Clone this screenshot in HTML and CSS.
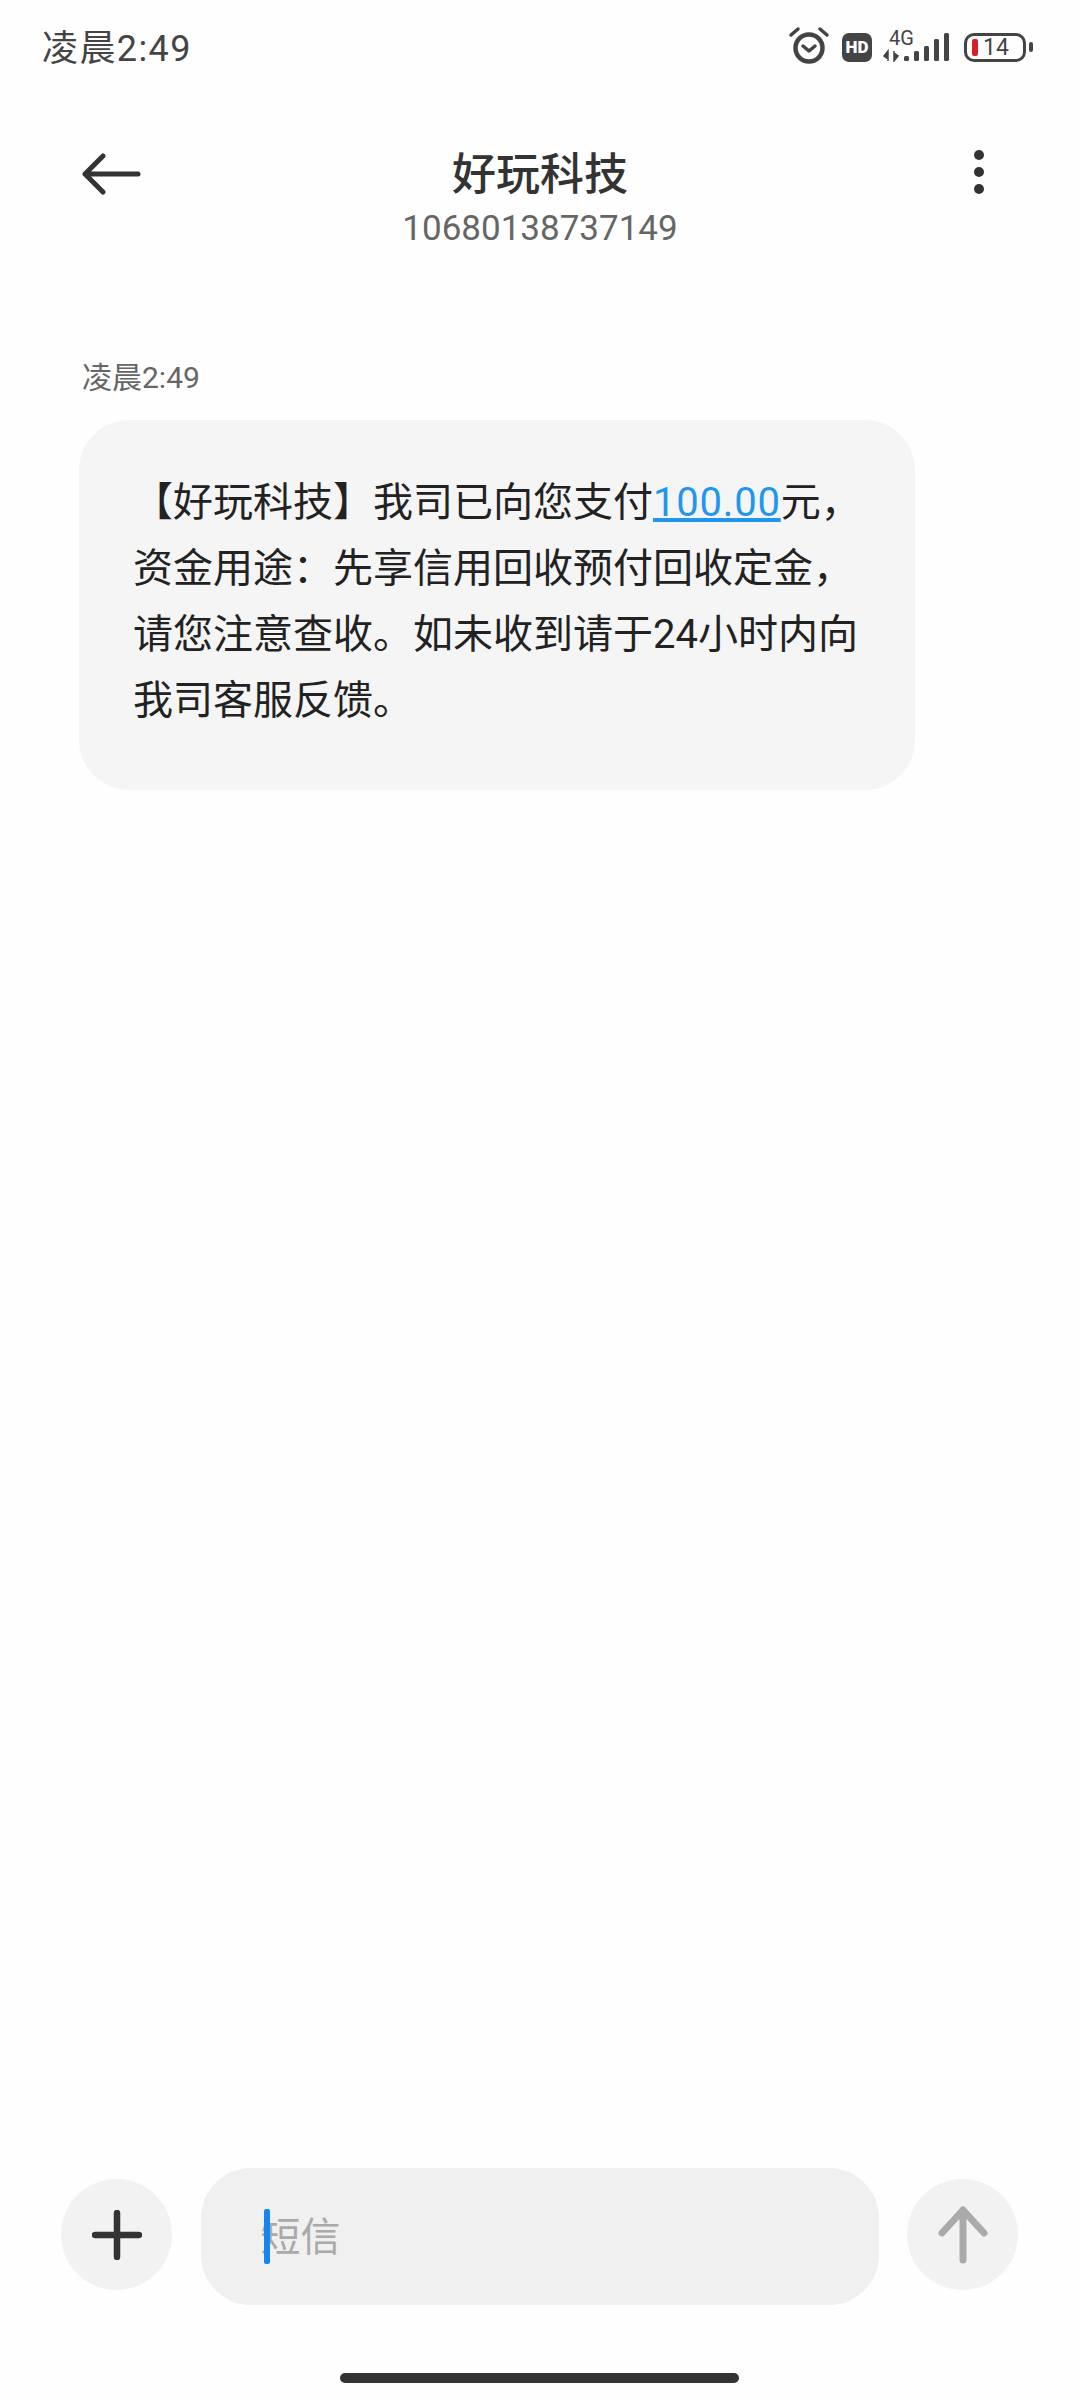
FILE: index.html
```html
<!DOCTYPE html>
<html lang="zh-CN">
<head>
    <meta charset="UTF-8">
    <title>好玩科技</title>
    <link rel="stylesheet" href="styles.css">
</head>
<body>
    <div class="page">
        <div class="status-bar">
            <span class="status-time">凌晨2:49</span>
            <div class="status-icons">
                <svg class="icon-alarm" width="42" height="38" viewBox="0 0 42 38">
                    <circle cx="21" cy="22" r="13.5" fill="none" stroke="#444" stroke-width="4.5"/>
                    <path d="M15 20l6 5 6-5" fill="none" stroke="#444" stroke-width="3.5" stroke-linecap="round" stroke-linejoin="round"/>
                    <path d="M3 9l7-6M39 9l-7-6" fill="none" stroke="#444" stroke-width="3.5" stroke-linecap="round"/>
                </svg>
                <span class="badge-hd">HD</span>
                <svg class="icon-signal" width="70" height="38" viewBox="0 -8 70 38">
                    <text x="6" y="13" class="signal-label">4G</text>
                    <path d="M5 19v10M1 24l4-5v8zM11 29V19M15 24l-4 5v-8z" fill="#444" stroke="#444" stroke-width="1.5"/>
                    <rect x="21" y="24" width="5" height="5" rx="1.5" fill="#444"/>
                    <rect x="31" y="19" width="5" height="10" rx="1.5" fill="#444"/>
                    <rect x="41" y="14" width="5" height="15" rx="1.5" fill="#444"/>
                    <rect x="51" y="7" width="5" height="22" rx="1.5" fill="#444"/>
                    <rect x="61" y="1" width="5" height="28" rx="1.5" fill="#444"/>
                </svg>
                <div class="battery">
                    <div class="battery-body">
                        <span class="battery-level"></span>
                        <span class="battery-num">14</span>
                    </div>
                    <span class="battery-nub"></span>
                </div>
            </div>
        </div>

        <div class="header">
            <svg class="icon-back" width="60" height="42" viewBox="0 0 60 42">
                <path d="M57 21H4M22 3L4 21l18 18" fill="none" stroke="#333" stroke-width="5" stroke-linecap="round" stroke-linejoin="round"/>
            </svg>
            <div class="header-title">
                <h1>好玩科技</h1>
                <p>10680138737149</p>
            </div>
            <div class="icon-more"><span></span><span></span><span></span></div>
        </div>

        <div class="thread">
            <p class="msg-time">凌晨2:49</p>
            <div class="bubble">【好玩科技】我司已向您支付<a href="#">100.00</a>元，资金用途：先享信用回收预付回收定金，请您注意查收。如未收到请于24小时内向我司客服反馈。</div>
        </div>

        <div class="composer">
            <div class="round-btn">
                <svg width="50" height="50" viewBox="0 0 50 50">
                    <path d="M25 3v44M3 25h44" fill="none" stroke="#333" stroke-width="6.5" stroke-linecap="round"/>
                </svg>
            </div>
            <div class="input-box">
                <span class="cursor"></span>
                <span class="placeholder">短信</span>
            </div>
            <div class="round-btn">
                <svg width="50" height="58" viewBox="0 0 50 58">
                    <path d="M25 54V4M4 27L25 4l21 23" fill="none" stroke="#aaa" stroke-width="7" stroke-linecap="round" stroke-linejoin="round"/>
                </svg>
            </div>
        </div>

        <div class="home-bar"></div>
    </div>
</body>
</html>
```

FILE: styles.css
```css
* { box-sizing: border-box; }
html, body { margin: 0; padding: 0; }
body { font-family: Roboto, "Noto Sans CJK SC", sans-serif; background-color: #fff; color: #222; }
.page { width: 1080px; height: 2400px; display: flex; flex-direction: column; overflow: hidden; background-color: #fefefe; }

.status-bar { height: 66px; margin-top: 12px; padding: 0 47px 0 42px; display: flex; align-items: center; justify-content: space-between; }
.status-time { font-size: 36px; color: #444; letter-spacing: 1.4px; }
.status-icons { display: flex; align-items: center; margin-top: 4px; }
.icon-alarm { margin-top: -4px; }
.badge-hd { width: 30px; height: 29px; margin-left: 12px; border-radius: 7px; background-color: #444; color: #fff; font-size: 17px; font-weight: 900; line-height: 29px; text-align: center; }
.icon-signal { margin-left: 11px; margin-top: -8px; }
.signal-label { font-size: 20px; fill: #444; font-family: Roboto, sans-serif; }
.battery { display: flex; align-items: center; margin-left: 11px; }
.battery-body { width: 62px; height: 29px; padding-left: 5px; border: 3px solid #444; border-radius: 10px; display: flex; align-items: center; }
.battery-level { width: 6px; height: 17px; border-radius: 2px; background-color: #d5202a; }
.battery-num { margin-left: 5px; font-size: 23px; color: #444; line-height: 23px; }
.battery-nub { width: 4px; height: 10px; margin-left: 3px; border-radius: 2px; background-color: #444; }

.header { height: 174px; padding: 52px 81px 0; display: grid; grid-template-columns: 1fr auto 1fr; align-items: start; }
.icon-back { margin-top: 23px; }
.header-title { text-align: center; margin-top: 13px; }
.header-title h1 { margin: 0; font-size: 44px; font-weight: 500; line-height: 64px; color: #333; }
.header-title p { margin: 0; font-size: 35px; line-height: 44px; color: #666; }
.icon-more { margin: 20px 15px 0 0; justify-self: end; display: flex; flex-direction: column; gap: 7px; }
.icon-more span { width: 10px; height: 10px; border-radius: 50%; background-color: #333; }

.thread { flex: 1; padding: 91px 79px 0; }
.msg-time { margin: 0; height: 60px; padding-left: 3px; padding-top: 10px; font-size: 30px; line-height: 50px; color: #666; }
.bubble { width: 836px; margin-top: 17px; padding: 50px 45px 56px 54px; border-radius: 50px; background-color: #f5f5f5; font-size: 40px; line-height: 66px; color: #222; }
.bubble a { color: #2196f0; letter-spacing: 0.8px; }

.composer { height: 137px; padding: 0 62px 0 61px; display: flex; align-items: center; justify-content: space-between; }
.round-btn { width: 111px; height: 111px; margin-top: -4px; border-radius: 50%; background-color: #f2f2f2; display: flex; align-items: center; justify-content: center; }
.input-box { position: relative; width: 678px; height: 137px; padding: 0 0 6px 60px; border-radius: 50px; background-color: #f0f0f0; display: flex; align-items: center; }
.placeholder { font-size: 40px; color: #aaa; }
.cursor { position: absolute; left: 63px; top: 41px; width: 6px; height: 55px; border-radius: 2px; background-color: #1685ee; }

.home-bar { width: 399px; height: 10px; margin: 68px 0 17px 340px; border-radius: 5px; background-color: #333; }
```
